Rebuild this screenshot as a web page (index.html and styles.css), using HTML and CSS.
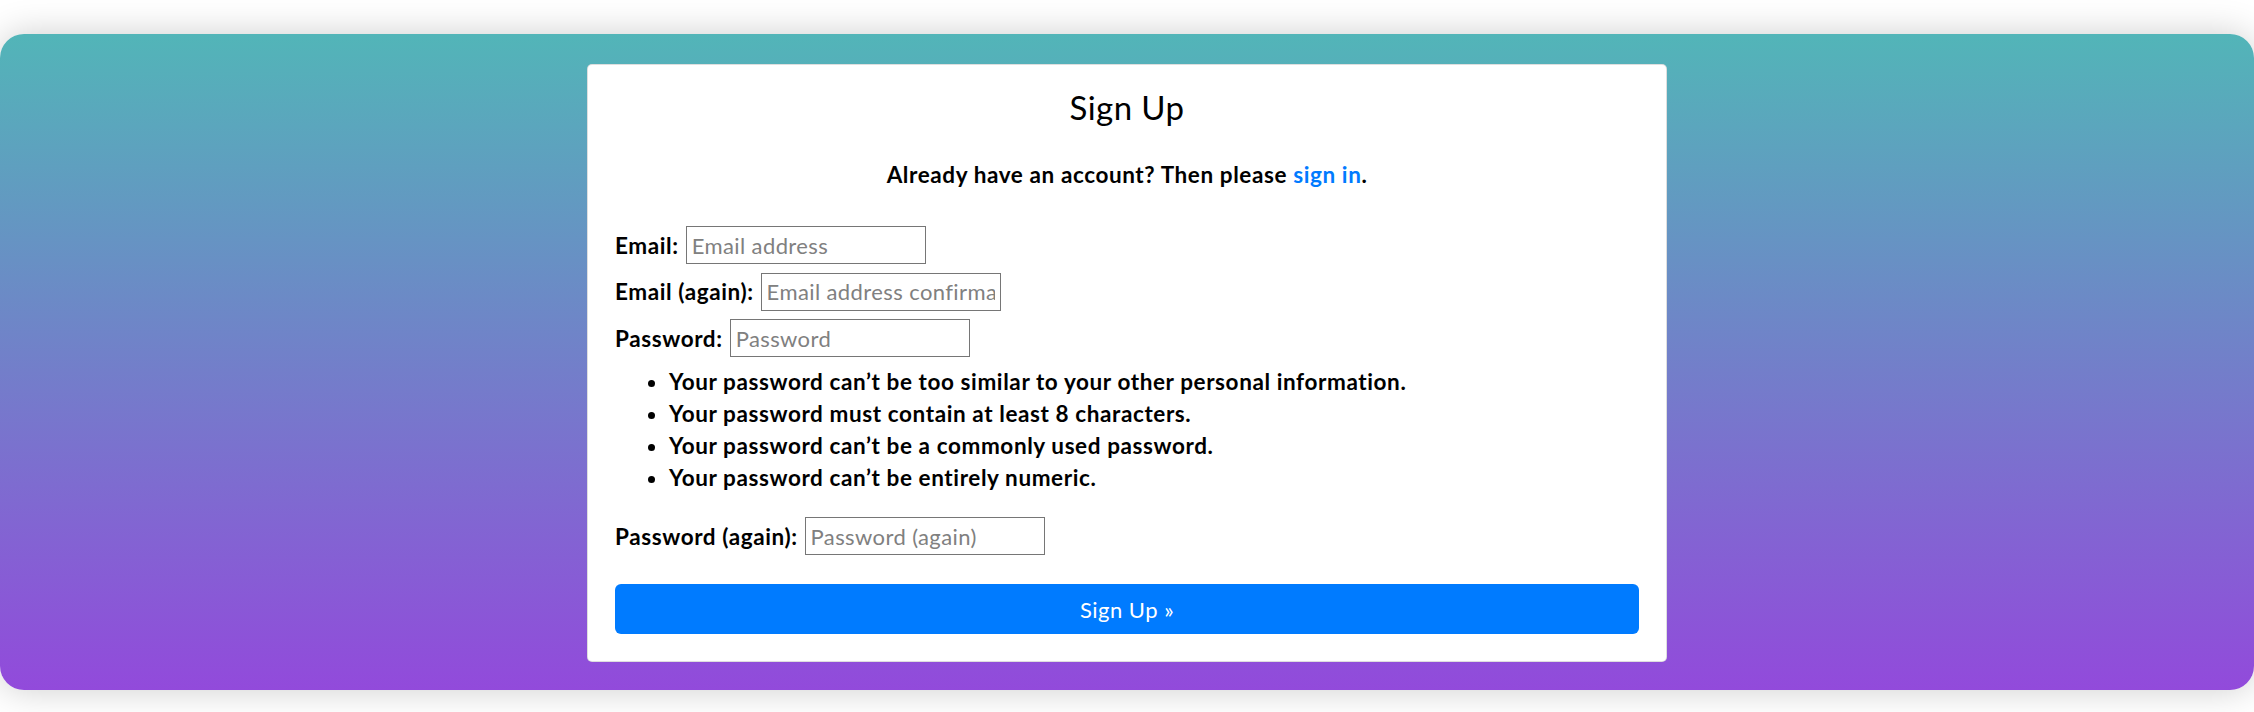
FILE: index.html
```html
<!DOCTYPE html>
<html lang="en">
<head>
<meta charset="utf-8">
<title>Sign Up</title>
<link rel="stylesheet" href="styles.css">
</head>
<body>
<div class="frame">
  <div class="card">
    <h2 class="title">Sign Up</h2>
    <p class="lead">Already have an account? Then please <a class="link" href="#">sign in</a>.</p>
    <form class="form">
      <p class="row"><label class="label" for="email">Email:</label><input class="field" type="email" id="email" placeholder="Email address"></p>
      <p class="row"><label class="label" for="email2">Email (again):</label><input class="field" type="email" id="email2" placeholder="Email address confirmation"></p>
      <p class="row"><label class="label" for="pw1">Password:</label><input class="field" type="password" id="pw1" placeholder="Password"></p>
      <ul class="help">
        <li>Your password can’t be too similar to your other personal information.</li>
        <li>Your password must contain at least 8 characters.</li>
        <li>Your password can’t be a commonly used password.</li>
        <li>Your password can’t be entirely numeric.</li>
      </ul>
      <p class="row"><label class="label" for="pw2">Password (again):</label><input class="field" type="password" id="pw2" placeholder="Password (again)"></p>
      <button class="submit" type="submit">Sign Up »</button>
    </form>
  </div>
</div>
</body>
</html>
```
FILE: styles.css
```css
html, body {
  margin: 0;
  padding: 0;
  background: #ffffff;
}
body {
  font-family: "Lato", "Open Sans", sans-serif;
  color: #000;
  padding: 34px 0 22px;
}
.frame {
  height: 656px;
  box-sizing: border-box;
  border-radius: 24px;
  background: linear-gradient(to bottom, #52b5b8 0%, #924adb 100%);
  box-shadow: 0 0 36px rgba(0, 0, 0, 0.2);
  padding-top: 30px;
  display: flex;
  justify-content: center;
  align-items: flex-start;
}
.card {
  width: 1080px;
  box-sizing: border-box;
  background: #fff;
  border: 1px solid rgba(0, 0, 0, 0.13);
  border-radius: 5px;
  padding: 22px 27px 27px;
}
.title {
  margin: 0;
  text-align: center;
  font-weight: 400;
  font-size: 33px;
  line-height: 40px;
  letter-spacing: 0.4px;
}
.lead {
  margin: 32px 0 0;
  text-align: center;
  font-weight: 700;
  font-size: 22.5px;
  line-height: 32px;
  letter-spacing: 0.6px;
}
.link {
  color: #007bff;
  text-decoration: none;
}
.form {
  margin: 35px 0 0;
}
.row {
  margin: 0 0 8.5px;
  display: flex;
  align-items: center;
  gap: 7px;
  font-size: 22.5px;
  font-weight: 700;
  letter-spacing: 0.6px;
}
.field {
  width: 240px;
  height: 38px;
  box-sizing: border-box;
  border: 1px solid #767676;
  border-radius: 0;
  padding: 0 5px;
  font-family: "Lato", "Open Sans", sans-serif;
  font-size: 22px;
  font-weight: 400;
  letter-spacing: 0.4px;
  color: #000;
  background: #fff;
}
.field::placeholder {
  color: #808080;
}
.help {
  margin: 0 0 23.5px;
  padding-left: 54px;
  font-size: 22.5px;
  font-weight: 700;
  line-height: 32px;
  letter-spacing: 0.6px;
}
.submit {
  display: block;
  width: 100%;
  height: 50px;
  margin-top: 29px;
  border: none;
  border-radius: 6px;
  background: #007bff;
  color: #fff;
  font-family: "Lato", "Open Sans", sans-serif;
  font-size: 22px;
  font-weight: 400;
  letter-spacing: 0.5px;
}
```
